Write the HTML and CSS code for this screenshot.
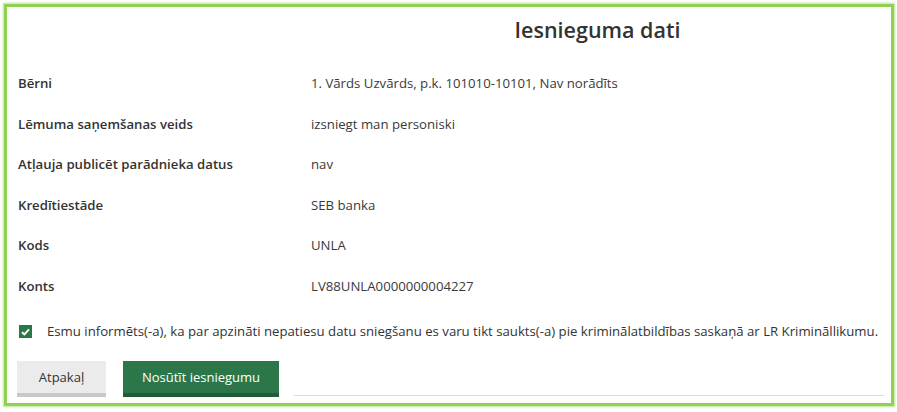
FILE: index.html
```html
<!DOCTYPE html>
<html lang="lv">
<head>
    <meta charset="UTF-8">
    <title>Iesnieguma dati</title>
    <link rel="stylesheet" href="styles.css">
</head>
<body>
    <div class="frame">
        <div class="summary">
            <div class="label"></div>
            <h1 class="title">Iesnieguma dati</h1>

            <div class="label">Bērni</div>
            <div class="value">1. Vārds Uzvārds, p.k. 101010-10101, Nav norādīts</div>

            <div class="label">Lēmuma saņemšanas veids</div>
            <div class="value">izsniegt man personiski</div>

            <div class="label">Atļauja publicēt parādnieka datus</div>
            <div class="value">nav</div>

            <div class="label">Kredītiestāde</div>
            <div class="value">SEB banka</div>

            <div class="label">Kods</div>
            <div class="value">UNLA</div>

            <div class="label">Konts</div>
            <div class="value">LV88UNLA0000000004227</div>
        </div>

        <label class="confirm">
            <span class="check">
                <svg width="9" height="8" viewBox="0 0 9 8"><path d="M1 4.2 L3.4 6.4 L8 1.4" fill="none" stroke="#fff" stroke-width="2"/></svg>
            </span>
            Esmu informēts(-a), ka par apzināti nepatiesu datu sniegšanu es varu tikt saukts(-a) pie kriminālatbildības saskaņā ar LR Krimināllikumu.
        </label>

        <div class="actions">
            <button class="btn btn-back">Atpakaļ</button>
            <button class="btn btn-send">Nosūtīt iesniegumu</button>
            <div class="rule"></div>
        </div>
    </div>
</body>
</html>
```

FILE: styles.css
```css
body {
    margin: 0;
    padding: 4px;
    background: #fff;
    font-family: 'Open Sans', 'Liberation Sans', sans-serif;
    color: #333;
}

.frame {
    box-sizing: border-box;
    width: 890px;
    height: 402px;
    border: 3px solid #8fd150;
    box-shadow: 0 0 2px 1px rgba(143, 209, 80, 0.6);
    padding: 0 7px 0 11px;
}

.summary {
    display: grid;
    grid-template-columns: 293px 1fr;
    grid-template-rows: 55.7px;
    grid-auto-rows: 40.6px;
    align-items: center;
}

.summary .title {
    margin: 0;
    text-align: center;
    font-size: 21.5px;
    font-weight: 600;
    color: #333;
    line-height: 30px;
    align-self: start;
    padding-top: 8px;
}

.summary > .label:first-child {
    height: 1px;
}

.label {
    font-size: 13.2px;
    font-weight: 600;
    color: #333;
}

.value {
    font-size: 13.2px;
    color: #3a3a3a;
}

.confirm {
    display: flex;
    align-items: center;
    gap: 15px;
    margin-top: 19px;
    padding-left: 1px;
    font-size: 13.2px;
    color: #333;
    line-height: 13px;
}

.check {
    width: 13px;
    height: 13px;
    background: #2b774a;
    display: flex;
    align-items: center;
    justify-content: center;
}

.actions {
    display: flex;
    align-items: flex-end;
    margin-top: 23px;
    margin-left: -1px;
}

.btn {
    height: 36px;
    border: none;
    border-bottom: 4px solid;
    font-family: inherit;
    font-size: 13px;
    padding: 0;
    cursor: pointer;
}

.btn-back {
    width: 89px;
    background: #ebebeb;
    border-bottom-color: #c8c8c8;
    color: #333;
}

.btn-send {
    width: 156px;
    margin-left: 17px;
    background: #2b774a;
    border-bottom-color: #1f5c37;
    color: #fff;
}

.rule {
    flex: 1;
    margin-left: 15px;
    margin-bottom: 1px;
    border-bottom: 1px solid #dcdcdc;
}
```
